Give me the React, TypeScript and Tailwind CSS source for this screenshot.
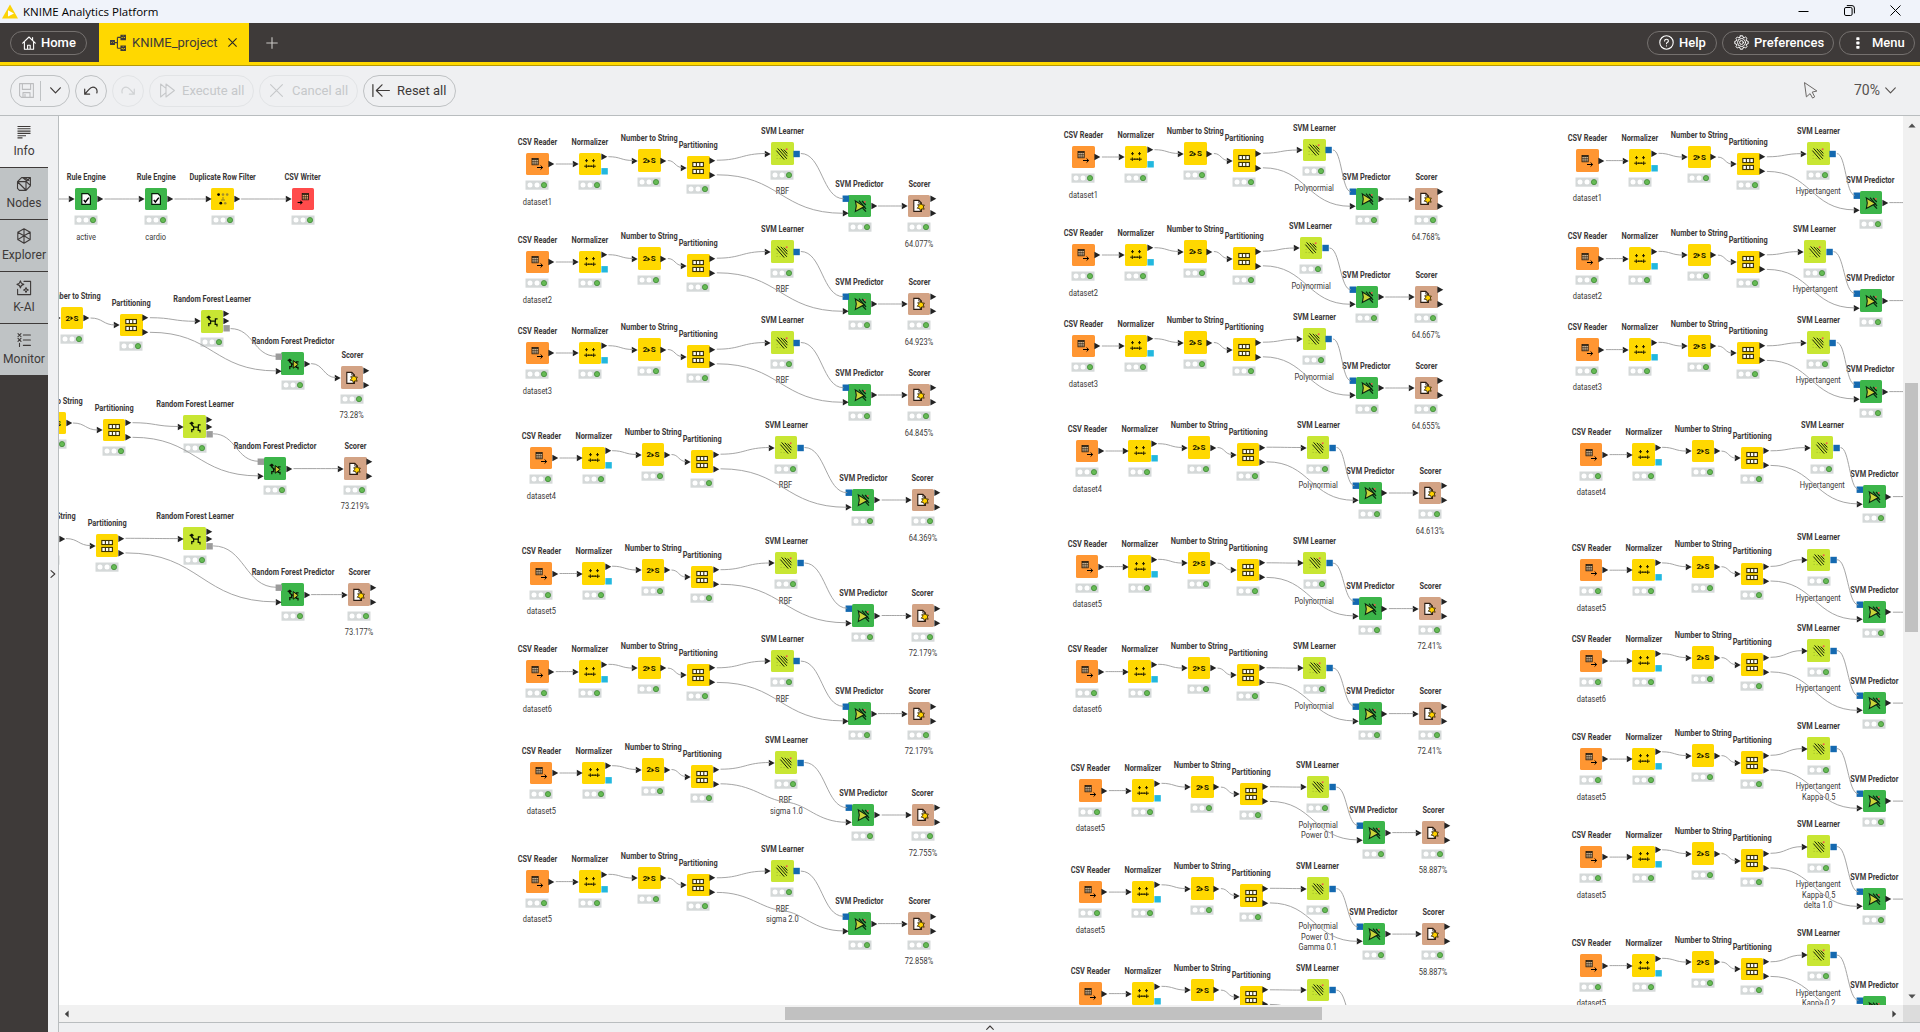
import React from "react";

type Kind =
  | "reader" | "normalizer" | "n2s" | "part" | "svmLearner" | "svmPredictor"
  | "scorer" | "rule" | "dup" | "writer" | "rfLearner" | "rfPredictor";

interface FlowNode {
  kind: Kind;
  x: number;
  y: number;
  label?: string[];
}
interface Wire {
  x1: number;
  y1: number;
  x2: number;
  y2: number;
  bend?: [number, number];
}

const ORIGIN_X = 59;
const ORIGIN_Y = 116;
const P = 7.3;

const TITLES: Record<Kind, string> = {
  reader: "CSV Reader",
  normalizer: "Normalizer",
  n2s: "Number to String",
  part: "Partitioning",
  svmLearner: "SVM Learner",
  svmPredictor: "SVM Predictor",
  scorer: "Scorer",
  rule: "Rule Engine",
  dup: "Duplicate Row Filter",
  writer: "CSV Writer",
  rfLearner: "Random Forest Learner",
  rfPredictor: "Random Forest Predictor",
};

const COLORS: Record<Kind, string> = {
  reader: "bg-[#ff9632]",
  normalizer: "bg-[#ffd800]",
  n2s: "bg-[#ffd800]",
  part: "bg-[#ffd800]",
  svmLearner: "bg-[#c8e633]",
  svmPredictor: "bg-[#3cb54a]",
  scorer: "bg-[#d3a385]",
  rule: "bg-[#3cb54a]",
  dup: "bg-[#ffd800]",
  writer: "bg-[#ff4b4b]",
  rfLearner: "bg-[#c8e633]",
  rfPredictor: "bg-[#3cb54a]",
};

type Port = [number, "tri" | "blue" | "cyan" | "gray"];
const INPUTS: Record<Kind, Port[]> = {
  reader: [],
  normalizer: [[0, "tri"]],
  n2s: [[0, "tri"]],
  part: [[0, "tri"]],
  svmLearner: [[0, "tri"]],
  svmPredictor: [[-P, "blue"], [P, "tri"]],
  scorer: [[0, "tri"]],
  rule: [[0, "tri"]],
  dup: [[0, "tri"]],
  writer: [[0, "tri"]],
  rfLearner: [[0, "tri"]],
  rfPredictor: [[-P, "gray"], [P, "tri"]],
};
const OUTPUTS: Record<Kind, Port[]> = {
  reader: [[0, "tri"]],
  normalizer: [[-P, "tri"], [P, "cyan"]],
  n2s: [[0, "tri"]],
  part: [[-P, "tri"], [P, "tri"]],
  svmLearner: [[0, "blue"]],
  svmPredictor: [[0, "tri"]],
  scorer: [[-P, "tri"], [P, "tri"]],
  rule: [[0, "tri"]],
  dup: [[0, "tri"]],
  writer: [],
  rfLearner: [[-P, "tri"], [0, "tri"], [P, "gray"]],
  rfPredictor: [[0, "tri"]],
};
const PORT_FILL = { tri: "#232323", blue: "#1469b0", cyan: "#22b8df", gray: "#9b9b9b" };

const nodes: FlowNode[] = [];
const wires: Wire[] = [];

function add(kind: Kind, x: number, y: number, label?: string[]): FlowNode {
  const n = { kind, x, y, label };
  if (x < 1920) nodes.push(n);
  return n;
}
function link(a: FlowNode, ao: number, b: FlowNode, bo: number, bend?: [number, number]) {
  wires.push({ x1: a.x + 18.5, y1: a.y + ao, x2: b.x - 16, y2: b.y + bo, bend });
}

function svmRow(
  x: number, y: number, lx: number, ly: number, px: number, sx: number,
  data: string, learner: string[], score: string, bent = false,
) {
  const r = add("reader", x, y, [data]);
  const n = add("normalizer", x + 52.6, y);
  const s = add("n2s", x + 112, y - 3.5);
  const p = add("part", x + 161, y + 3.5);
  const l = add("svmLearner", x + lx, y + ly, learner);
  const q = add("svmPredictor", x + px, y + 42);
  const c = add("scorer", x + sx, y + 42, score ? [score] : undefined);
  link(r, 0, n, 0);
  link(n, -P, s, 0);
  link(s, 0, p, 0);
  link(p, -P, l, 0);
  link(p, P, q, P, bent ? [l.x, l.y + 39.5] : undefined);
  link(l, 0, q, -P);
  link(q, 0, c, 0);
}

function rfRow(
  n2: [number, number], pt: [number, number], ln: [number, number],
  pr: [number, number], sc: [number, number], score: string,
) {
  const a = add("n2s", n2[0], n2[1]);
  const b = add("part", pt[0], pt[1]);
  const c = add("rfLearner", ln[0], ln[1]);
  const d = add("rfPredictor", pr[0], pr[1]);
  const e = add("scorer", sc[0], sc[1], [score]);
  link(a, 0, b, 0);
  link(b, -P, c, 0);
  link(b, P, d, P);
  link(c, P, d, -P);
  link(d, 0, e, 0);
}

const r1 = add("rule", 86, 199, ["active"]);
const r2 = add("rule", 156, 199, ["cardio"]);
const dp = add("dup", 222.6, 199);
const wr = add("writer", 303, 199);
link(r1, 0, r2, 0);
link(r2, 0, dp, 0);
link(dp, 0, wr, 0);
wires.push({ x1: 40, y1: 199, x2: 70, y2: 199 });

rfRow([72, 318], [131.4, 325], [212, 321.3], [292.6, 363.6], [352, 377.6], "73.28%");
rfRow([54.5, 423], [114, 430], [194.6, 426.5], [275, 468.6], [355.3, 468.6], "73.219%");
rfRow([47.5, 538.6], [107, 545.6], [194.6, 538.6], [292.6, 594.6], [359, 594.6], "73.177%");

const rbf: [number, number, string, string[], string][] = [
  [537.3, 164, "dataset1", ["RBF"], "64.077%"],
  [537.3, 262, "dataset2", ["RBF"], "64.923%"],
  [537.3, 353, "dataset3", ["RBF"], "64.845%"],
  [541, 458, "dataset4", ["RBF"], "64.369%"],
  [541, 573.5, "dataset5", ["RBF"], "72.179%"],
  [537.3, 671.6, "dataset6", ["RBF"], "72.179%"],
  [541, 773, "dataset5", ["RBF", "sigma 1.0"], "72.755%"],
  [537.3, 881.6, "dataset5", ["RBF", "sigma 2.0"], "72.858%"],
];
rbf.forEach(([x, y, d, l, s]) => svmRow(x, y, 245, -10.5, 322.2, 381.7, d, l, s, l.length > 1));

const poly: [number, number, number, number, string, string[], string][] = [
  [1083.4, 157, 231, -7, "dataset1", ["Polynormial"], "64.768%"],
  [1083.4, 255, 227.5, -7, "dataset2", ["Polynormial"], "64.667%"],
  [1083.4, 346, 231, -7, "dataset3", ["Polynormial"], "64.655%"],
  [1087, 451, 231, -3.5, "dataset4", ["Polynormial"], "64.613%"],
  [1087, 566.6, 227.5, -3.5, "dataset5", ["Polynormial"], "72.41%"],
  [1087, 671.6, 227.5, -3.5, "dataset6", ["Polynormial"], "72.41%"],
  [1090.4, 790.6, 227.5, -3.5, "dataset5", ["Polynormial", "Power 0.1"], "58.887%"],
  [1090.4, 892.1, 227.5, -3.5, "dataset5", ["Polynormial", "Power 0.1", "Gamma 0.1"], "58.887%"],
];
poly.forEach(([x, y, lx, ly, d, l, s]) => svmRow(x, y, lx, ly, 283.4, 343, d, l, s));

// The last polynomial row runs below the visible part of the canvas.
{
  const r = add("reader", 1090.4, 993.6);
  const n = add("normalizer", 1143, 993.6);
  const s = add("n2s", 1202.4, 990.1);
  const p = add("part", 1251.4, 997.1);
  const l = add("svmLearner", 1317.9, 990.1);
  link(r, 0, n, 0);
  link(n, -P, s, 0);
  link(s, 0, p, 0);
  link(p, -P, l, 0);
  wires.push({ x1: 1269.9, y1: 1004.4, x2: 1357.8, y2: 1042.9 });
  wires.push({ x1: 1336.4, y1: 990.1, x2: 1357.8, y2: 1028.3 });
}

const hyper: [number, number, number, number, string, string[]][] = [
  [1587.4, 160.6, 231, -7, "dataset1", ["Hypertangent"]],
  [1587.4, 258.6, 227.5, -7, "dataset2", ["Hypertangent"]],
  [1587.4, 349.6, 231, -7, "dataset3", ["Hypertangent"]],
  [1591, 454.6, 231, -7, "dataset4", ["Hypertangent"]],
  [1591, 570.2, 227.5, -10.5, "dataset5", ["Hypertangent"]],
  [1591, 661.1, 227.5, -10.5, "dataset6", ["Hypertangent"]],
  [1591, 759.1, 227.5, -10.5, "dataset5", ["Hypertangent", "Kappa 0.5"]],
  [1591, 857.1, 227.5, -10.5, "dataset5", ["Hypertangent", "Kappa 0.5", "delta 1.0"]],
  [1591, 965.6, 227.5, -10.5, "dataset5", ["Hypertangent", "Kappa 0.2"]],
];
hyper.forEach(([x, y, lx, ly, d, l]) => svmRow(x, y, lx, ly, 283.4, 343, d, l, ""));

function curve(x1: number, y1: number, x2: number, y2: number) {
  const m = (x1 + x2) / 2;
  return `C${m} ${y1} ${m} ${y2} ${x2} ${y2}`;
}
function wirePath({ x1, y1, x2, y2, bend }: Wire) {
  if (bend) {
    const [bx, by] = bend;
    const s = (y2 - y1) / (x2 - x1) / 3;
    return `M${x1} ${y1}C${(x1 + bx) / 2} ${y1} ${bx - 22} ${by - 22 * s} ${bx} ${by}C${bx + 22} ${by + 22 * s} ${(bx + x2) / 2} ${y2} ${x2} ${y2}`;
  }
  return `M${x1} ${y1}${curve(x1, y1, x2, y2)}`;
}

function NodeGlyph({ kind }: { kind: Kind }) {
  const table = (x: number, y: number, fill: string) => (
    <g transform={`translate(${x} ${y})`}>
      <rect x="0.4" y="0.4" width="6.2" height="6.4" fill={fill} stroke="#1c1206" strokeWidth="0.8" />
      <path d="M0.4 1.3H6.6" stroke="#1c1206" strokeWidth="1.1" />
      <path d="M0.4 3.4H6.6M0.4 5.1H6.6M2.5 2V6.8M4.6 2V6.8" stroke="#1c1206" strokeWidth="0.6" />
    </g>
  );
  switch (kind) {
    case "reader":
      return (
        <>
          {table(-5.4, -6, "#ffe0b8")}
          <path d="M0 3.5H5.4M3.6 1.5L5.7 3.5L3.6 5.5" stroke="#000" strokeWidth="1" fill="none" />
        </>
      );
    case "writer":
      return (
        <>
          {table(-1.2, -6, "#ffc08a")}
          <path d="M-5.4 3.5H-1.8" stroke="#000" strokeWidth="1.1" />
          <path d="M-2.6 1.3L-0.2 3.5L-2.6 5.7Z" fill="#000" />
        </>
      );
    case "normalizer":
      return (
        <path
          d="M-5 -3.3H-2M-3.5 -5V-1.8M2 -3.3H5M3.5 -5V-1.8M-5.8 2.2H5.8M-3.7 0.4V4M-1.2 1.4V3M1.2 1.4V3M3.7 0.4V4"
          stroke="#231d00" strokeWidth="1" fill="none"
        />
      );
    case "part":
      return (
        <>
          {[-5.5, 1.4].map((y) => (
            <g key={y} stroke="#3b3200" strokeWidth="1.1">
              <rect x="-5.2" y={y} width="10.6" height="4.1" fill="#fff" />
              <path d={`M-1.6 ${y}v4.1M1.8 ${y}v4.1`} />
            </g>
          ))}
        </>
      );
    case "svmLearner":
      return (
        <>
          <path d="M-5.6 -3.4L2.2 5.6M-4.4 -5.6L4.8 4.8M-1.2 -5.2L5.4 2.2M1.8 -4.4L5.4 -0.6" stroke="#16200a" strokeWidth="1" />
          <rect x="3.8" y="-5.6" width="1.7" height="1.7" fill="#f0524f" />
          <path d="M-5.4 1.4h1M-5.4 4.4h1M-2.4 4.6h1" stroke="#9bb52a" strokeWidth="1" />
        </>
      );
    case "svmPredictor":
      return (
        <>
          <path d="M-1 -5.4L6 3M2 -5L5.8 -1M2.6 2L6 5.6" stroke="#0b2a10" strokeWidth="1.2" />
          <path d="M-4.6 -5L4.4 0.6L-4.6 5.4Q-2.8 0.2 -4.6 -5Z" fill="#c9d63a" stroke="#0b2010" strokeWidth="1.1" />
          <rect x="4" y="-5" width="1.6" height="1.6" fill="#e8534f" />
        </>
      );
    case "scorer":
      return (
        <>
          <path d="M-5.2 -5.6H-0.2L2.4 -3V5.4H-5.2Z" fill="#fff" stroke="#2b1c12" strokeWidth="1.1" />
          <path d="M-0.2 -5.4V-2.8H2.4" stroke="#2b1c12" strokeWidth="0.8" fill="none" />
          <path d="M2 -3L3 -1L5.4 -0.9L4.2 1L5.2 3.2L2.8 2.8L1.4 4.8L0.6 2.6L-1.8 2.2L-0.4 0.6L-1.2 -1.4L1 -1Z" fill="#ffd200" stroke="#2b1c00" strokeWidth="0.8" />
        </>
      );
    case "rule":
      return (
        <>
          <path d="M-4.2 -5.4H2L4.4 -3V5.4H-4.2Z" fill="#fff" stroke="#061f0a" strokeWidth="1.2" />
          <path d="M-2.2 1L-0.6 3L2.8 -1.4" fill="none" stroke="#000" strokeWidth="1.4" />
        </>
      );
    case "dup":
      return (
        <>
          <circle cx="-4.4" cy="-4.4" r="1.4" fill="#000" />
          <circle cx="0" cy="-4.4" r="1.3" fill="#a38e2a" />
          <circle cx="4.2" cy="-4.4" r="1.3" fill="#a38e2a" />
          <path d="M0 -2V0.8M-2 1H2" stroke="#8b7820" strokeWidth="0.9" />
          <circle cx="-2.2" cy="4.2" r="1.4" fill="#000" />
          <circle cx="2.2" cy="4.2" r="1.3" fill="#a38e2a" />
        </>
      );
    case "rfLearner":
    case "rfPredictor":
      return (
        <>
          <circle cx="-3.3" cy="-3.6" r="1.4" fill="#000" />
          <path d="M-5.4 -3.6H-1.4M-3.3 -5.2V-2L-1 0H3.4V-2.2H5.6M-1.4 0V2.6H-3.2V5.2M3.2 0V3.4H5V5.4" stroke="#0b1405" strokeWidth="1.25" fill="none" />
          {kind === "rfPredictor" && (
            <path d="M0.2 -3.4L5.2 0.4L0.2 4.2Z" fill="#c9c832" stroke="#0b1405" strokeWidth="1" />
          )}
        </>
      );
    case "n2s":
      return <path d="M-1.5 -1.9L1.3 0.2L-1.5 2.3Z" fill="#231d00" />;
  }
}

function PortMark({ side, port }: { side: "in" | "out"; port: Port }) {
  const [dy, type] = port;
  const fill = PORT_FILL[type];
  if (type === "tri") {
    const x = side === "in" ? -17.2 : 11.4;
    return <path d={`M${x} ${dy - 3.2}L${x + 5.9} ${dy}L${x} ${dy + 3.2}Z`} fill={fill} />;
  }
  return <rect x={side === "in" ? -17.4 : 11.4} y={dy - 3.2} width="6.4" height="6.4" fill={fill} />;
}

function NodeView({ node }: { node: FlowNode }) {
  const { kind, x, y, label } = node;
  return (
    <div className="absolute h-0 w-0" style={{ left: x - ORIGIN_X, top: y - ORIGIN_Y }}>
      <div className={`absolute -left-[11.2px] -top-[11.2px] h-[22.4px] w-[22.4px] rounded-[1.6px] ${COLORS[kind]}`} />
      <svg className="absolute -left-5 -top-5 h-12 w-10" viewBox="-20 -20 40 48">
        <NodeGlyph kind={kind} />
        {INPUTS[kind].map((p) => <PortMark key={"i" + p[0]} side="in" port={p} />)}
        {OUTPUTS[kind].map((p) => <PortMark key={"o" + p[0]} side="out" port={p} />)}
        <rect x="-11.5" y="16.5" width="23" height="9.2" fill="#d5d9d9" />
        <circle cx="-7" cy="21.1" r="2.5" fill="#fff" />
        <circle cx="0" cy="21.1" r="2.5" fill="#fff" />
        <circle cx="7" cy="21.1" r="2.6" fill="#66bb55" stroke="#3f8a35" strokeWidth="0.8" />
      </svg>
      {kind === "n2s" && (
        <div className="absolute -left-[7px] -top-[4.5px] flex w-[14px] justify-between px-[0.5px] text-[8px] font-bold leading-[10px] text-[#231d00]">
          <span>2</span>
          <span>S</span>
        </div>
      )}
      <div className="absolute -left-[60px] -top-[28.4px] flex w-[120px] justify-center whitespace-nowrap text-[8.4px] font-bold leading-[12px] text-[#3b3838]">
        <span className="scale-x-[0.88]">{TITLES[kind]}</span>
      </div>
      {label && (
        <div className="absolute -left-[40px] top-[32.9px] flex w-[80px] flex-col items-center whitespace-nowrap text-[8.4px] leading-[10.4px] text-[#3b3838]">
          {label.map((t) => <span key={t} className="scale-x-[0.89]">{t}</span>)}
        </div>
      )}
    </div>
  );
}

function Pill({ className, children }: { className: string; children: React.ReactNode }) {
  return <div className={`flex shrink-0 items-center rounded-full border ${className}`}>{children}</div>;
}

const stroke = { fill: "none", stroke: "currentColor", strokeLinecap: "round", strokeLinejoin: "round" } as const;

function TitleBar() {
  return (
    <div className="flex h-[23px] items-center bg-[#f0f3fa] text-black">
      <svg className="ml-[2px] h-[15px] w-4" viewBox="0 0 16 15">
        <path d="M8 0.5L16 14.5H0Z" fill="#fcd307" />
        <path d="M6 6.2L12 9.6L6 12.6Z" fill="#fff" />
      </svg>
      <span className="ml-[5px] mt-[1px] font-['Open_Sans','Noto_Sans',sans-serif] text-[11.5px] leading-none">KNIME Analytics Platform</span>
      <div className="ml-auto mr-[19px] flex items-center gap-[35px]">
        <svg className="h-[11px] w-[11px]" viewBox="0 0 11 11"><path d="M0.5 5.5H10.5" stroke="#000" /></svg>
        <svg className="-mt-[2px] h-[11px] w-[11px]" viewBox="0 0 11 11" fill="none" stroke="#000">
          <rect x="0.5" y="2.5" width="7.6" height="8" rx="1.4" />
          <path d="M2.8 0.6H8Q10.4 0.6 10.4 3V8.4" />
        </svg>
        <svg className="-mt-[2px] h-[11px] w-[11px]" viewBox="0 0 11 11"><path d="M0.5 0.5L10.5 10.5M10.5 0.5L0.5 10.5" stroke="#000" /></svg>
      </div>
    </div>
  );
}

function WorkflowIcon() {
  return (
    <svg className="h-[18px] w-[17px]" viewBox="0 0 17 18" fill="none" stroke="currentColor" strokeWidth="1.1">
      <path d="M0.6 6.6H4.4V10.4H0.6ZM0.6 6.6L4.4 10.4M4.4 6.6L0.6 10.4" />
      <path d="M11 1.2H15.4V5.6H11ZM11 1.2L15.4 5.6M15.4 1.2L11 5.6" />
      <path d="M11 12H15.4V16.4H11ZM11 12L15.4 16.4M15.4 12L11 16.4" />
      <path d="M4.4 8.6H7.4M7.4 3.4V14.2M7.4 3.4H11M7.4 14.2H11" />
    </svg>
  );
}

function TabBar() {
  return (
    <div className="flex h-[39px] items-center bg-[#3e3a39] text-[13px] text-white">
      <Pill className="ml-[10px] h-6 w-[77px] border-[#75716f] pl-[11px] font-medium">
        <svg className="mr-[5px] h-[14px] w-[14px]" viewBox="0 0 14 14" strokeWidth="1.1" {...stroke}>
          <path d="M0.7 7.2L7 1L13.3 7.2M2.4 6V13.2H11.6V6M5.6 13V9.2H8.2V13M10.6 3.8V1.6" />
        </svg>
        Home
      </Pill>
      <div className="ml-[12px] flex h-full w-[150px] items-center bg-[#ffd800] text-[#3e3a39]">
        <span className="ml-[11px]"><WorkflowIcon /></span>
        <span className="ml-[5px] w-[86px]">KNIME_project</span>
        <svg className="ml-[10px] h-[9px] w-[9px]" viewBox="0 0 9 9" stroke="#2a2625" strokeWidth="1.1"><path d="M0.4 0.4L8.6 8.6M8.6 0.4L0.4 8.6" /></svg>
      </div>
      <svg className="ml-[17px] h-3 w-3" viewBox="0 0 12 12" stroke="#c9c7c6" strokeWidth="1.1"><path d="M6 0.3V11.7M0.3 6H11.7" /></svg>
      <div className="ml-auto mr-[5px] flex gap-[5px] font-medium">
        <Pill className="h-6 w-[70px] border-[#75716f] pl-[11px]">
          <svg className="mr-[5px] h-[15px] w-[15px]" viewBox="0 0 15 15" strokeWidth="1.1" {...stroke}>
            <circle cx="7.5" cy="7.5" r="6.7" />
            <path d="M5.6 6Q5.6 4.2 7.5 4.2T9.4 5.9Q9.4 6.9 8.2 7.4Q7.5 7.8 7.5 8.8M7.5 10.8V10.9" />
          </svg>
          Help
        </Pill>
        <Pill className="h-6 w-[112px] border-[#75716f] pl-[11px]">
          <svg className="mr-[5px] h-[15px] w-[15px]" viewBox="0 0 15 15" strokeWidth="1" {...stroke}>
            <circle cx="7.5" cy="7.5" r="1.9" />
            <circle cx="7.5" cy="7.5" r="4" />
            <path d="M6.3 0.8H8.7L9.1 2.3L10.2 2.8L11.6 2L13 3.4L12.2 4.8L12.7 5.9L14.2 6.3V8.7L12.7 9.1L12.2 10.2L13 11.6L11.6 13L10.2 12.2L9.1 12.7L8.7 14.2H6.3L5.9 12.7L4.8 12.2L3.4 13L2 11.6L2.8 10.2L2.3 9.1L0.8 8.7V6.3L2.3 5.9L2.8 4.8L2 3.4L3.4 2L4.8 2.8L5.9 2.3Z" />
          </svg>
          Preferences
        </Pill>
        <Pill className="h-6 w-[76px] border-[#75716f] pl-4">
          <svg className="mr-[12px] h-3 w-1" viewBox="0 0 4 12" fill="#fff">
            <rect x="0.3" y="0.3" width="3.2" height="2.8" rx="0.6" /><rect x="0.3" y="4.6" width="3.2" height="2.8" rx="0.6" /><rect x="0.3" y="8.9" width="3.2" height="2.8" rx="0.6" />
          </svg>
          Menu
        </Pill>
      </div>
    </div>
  );
}

function Toolbar() {
  return (
    <div className="flex h-[50px] items-center gap-[5px] border-b border-[#b9bdbf] bg-[#eff0f2] pl-[10px] text-[13px] text-[#3e3a39]">
      <Pill className="h-8 w-[60px] border-[#bfc2c4]">
        <svg className="ml-[8px] h-[15px] w-[15px] text-[#bcbdbf]" viewBox="0 0 15 15" strokeWidth="1.1" {...stroke}>
          <path d="M0.6 0.6H14.4V14.4H2.4L0.6 12.6ZM3.4 0.8V6.4H11.6V0.8M4 14.2V9.6H11V14.2M6 11.4V14" />
        </svg>
        <span className="ml-[6px] h-5 w-px bg-[#bfc2c4]" />
        <svg className="ml-[9px] h-[7px] w-[11px]" viewBox="0 0 11 7" strokeWidth="1.2" {...stroke}><path d="M0.7 0.8L5.5 5.8L10.3 0.8" /></svg>
      </Pill>
      <Pill className="h-8 w-8 justify-center border-[#bfc2c4]">
        <svg className="h-[9px] w-[14px]" viewBox="0 0 14 9" strokeWidth="1.2" {...stroke}><path d="M0.7 3.2V8.2H5.6M0.9 8L5 3.4Q8.4 -0.6 12 2.4Q13.6 4.4 12.8 7" /></svg>
      </Pill>
      <Pill className="h-8 w-8 justify-center border-[#e2e4e6] text-[#d0d2d4]">
        <svg className="h-[9px] w-[14px]" viewBox="0 0 14 9" strokeWidth="1.2" {...stroke}><path d="M13.3 3.2V8.2H8.4M13.1 8L9 3.4Q5.6 -0.6 2 2.4Q0.4 4.4 1.2 7" /></svg>
      </Pill>
      <Pill className="h-8 w-[105px] border-[#e2e4e6] pl-[10px] text-[#c6c8ca]">
        <svg className="mr-[7px] h-[15px] w-[15px]" viewBox="0 0 15 15" strokeWidth="1.1" {...stroke}><path d="M0.6 1V14L6 9.6V14L14.4 7.5L6 1V5.4ZM6 5.4V9.6" /></svg>
        Execute all
      </Pill>
      <Pill className="h-8 w-[99px] border-[#e2e4e6] pl-[10px] text-[#c6c8ca]">
        <svg className="mr-[9px] h-[13px] w-[13px]" viewBox="0 0 13 13" strokeWidth="1.1" {...stroke}><path d="M0.6 0.6L12.4 12.4M12.4 0.6L0.6 12.4" /></svg>
        Cancel all
      </Pill>
      <Pill className="h-8 w-[93px] border-[#bfc2c4] pl-[8px]">
        <svg className="mr-[7px] h-[13px] w-[18px]" viewBox="0 0 18 13" strokeWidth="1.2" {...stroke}><path d="M0.9 0.6V12.4M4.4 6.5H17.4M10 0.8L4.4 6.5L10 12.2" /></svg>
        Reset all
      </Pill>
      <svg className="ml-auto h-[17px] w-[14px] text-[#6b6866]" viewBox="0 0 14 17" strokeWidth="1" {...stroke}>
        <path d="M0.8 0.8L12.9 9L8.2 10.1L10.7 14.8L8.6 16.1L6.1 11.6L2.7 14.6Z" />
      </svg>
      <div className="-mt-px ml-[31px] mr-[24px] flex items-center text-[14px] text-[#55514f]">
        70%
        <svg className="ml-[5px] mt-[1px] h-[7px] w-[11px]" viewBox="0 0 11 7" strokeWidth="1.1" {...stroke}><path d="M0.7 0.8L5.5 5.8L10.3 0.8" /></svg>
      </div>
    </div>
  );
}

const SIDE: { name: string; icon: React.ReactNode }[] = [
  { name: "Info", icon: <path d="M1.5 2.5H14.5M1.5 4.8H14.5M1.5 7.1H14.5M1.5 9.4H14.5M1.5 11.7H10M1.5 13.9H6.5" strokeLinecap="butt" /> },
  { name: "Nodes", icon: <path d="M1.5 5.6L10 5.6V14.4H3.4L1.5 12.4ZM1.5 5.6L5.6 1.6H14.4L10 5.6M14.4 1.6V9.8L10 14.4M1.8 6L9.8 14M7 1.8L11 5M8.6 1.6L13 4.6M10.5 5.8L14 9" /> },
  { name: "Explorer", icon: <path d="M8 0.8L14.2 4.2V11.6L8 15.2L1.8 11.6V4.2ZM1.8 4.2L8 7.8L14.2 4.2M8 7.8V15.2M8 0.8V7.8M1.8 11.6L8 7.8L14.2 11.6" /> },
  { name: "K-AI", icon: <path d="M8 1.4H14.6V14.6H1.6V9.4M4.4 0.8Q4.8 3.8 7.8 4.4Q4.8 5 4.4 8Q4 5 1 4.4Q4 3.8 4.4 0.8ZM10 7.6Q10.3 9.7 12.4 10Q10.3 10.3 10 12.4Q9.7 10.3 7.6 10Q9.7 9.7 10 7.6Z" /> },
  { name: "Monitor", icon: <path d="M2 1.6L5 4.6M5 1.6L2 4.6M2 6.4L5 9.4M5 6.4L2 9.4M3.5 11.2V14.4M7.4 3H14.4M7.4 8H14.4M7.4 13.4H14.4" /> },
];

function Sidebar() {
  return (
    <div className="flex w-12 shrink-0 flex-col bg-[#3e3a39]">
      {SIDE.map((s, i) => (
        <div
          key={s.name}
          className={`flex h-[52px] flex-col items-center border-b border-[#3e3a39] text-[12.1px] text-[#3e3a39] ${i === 0 ? "bg-[#eff0f2]" : "bg-[#bfc3c5]"}`}
        >
          <svg className="mt-[8px] h-4 w-4" viewBox="0 0 16 16" strokeWidth="1.1" {...stroke}>{s.icon}</svg>
          <span className="mt-[3px] leading-4">{s.name}</span>
        </div>
      ))}
    </div>
  );
}

function Canvas() {
  return (
    <div className="relative min-h-0 flex-1 overflow-hidden bg-white">
      {nodes.map((n, i) => <NodeView key={i} node={n} />)}
      <svg className="absolute left-0 top-0 h-[889px] w-[1844px]" viewBox="59 116 1844 889" fill="none" stroke="#9b9b9b" strokeWidth="0.9">
        {wires.map((w, i) => <path key={i} d={wirePath(w)} />)}
      </svg>
    </div>
  );
}

export default function App() {
  return (
    <div className="flex h-[1032px] w-[1920px] flex-col overflow-hidden bg-[#eff0f2] font-[Roboto,sans-serif]">
      <TitleBar />
      <TabBar />
      <div className="h-1 border-b border-[#b59a08] bg-[#ffd800]" />
      <Toolbar />
      <div className="flex min-h-0 flex-1">
        <Sidebar />
        <div className="flex w-[11px] shrink-0 items-center border-r border-[#b9bdbf] pl-[2px]">
          <svg className="h-[8px] w-[6px] text-[#3e3a39]" viewBox="0 0 6 8" strokeWidth="1.1" {...stroke}><path d="M1 0.6L4.8 4L1 7.4" /></svg>
        </div>
        <div className="flex min-w-0 flex-1 flex-col">
          <div className="flex min-h-0 flex-1">
            <div className="flex min-w-0 flex-1 flex-col">
              <Canvas />
              <div className="flex h-[17px] shrink-0 items-center bg-[#f1f1f1]">
                <svg className="ml-[5px] h-2 w-[5px]" viewBox="0 0 5 8"><path d="M4.6 0.4V7.6L0.8 4Z" fill="#404040" /></svg>
                <div className="ml-[716px] h-[13px] w-[537px] bg-[#c1c1c1]" />
                <svg className="ml-auto mr-[6px] h-2 w-[5px]" viewBox="0 0 5 8"><path d="M0.4 0.4V7.6L4.2 4Z" fill="#404040" /></svg>
              </div>
            </div>
            <div className="flex w-[17px] shrink-0 flex-col items-center bg-[#f1f1f1]">
              <svg className="mt-[7px] h-[5px] w-2 shrink-0" viewBox="0 0 8 5"><path d="M0.4 4.4H7.6L4 0.6Z" fill="#505050" /></svg>
              <div className="mt-[255px] h-[249px] w-[13px] shrink-0 bg-[#c1c1c1]" />
              <svg className="mb-[6px] mt-auto h-[5px] w-2 shrink-0" viewBox="0 0 8 5"><path d="M0.4 0.6H7.6L4 4.4Z" fill="#505050" /></svg>
              <div className="h-[17px] w-full shrink-0 bg-[#dcdcdc]" />
            </div>
          </div>
          <div className="flex h-[10px] shrink-0 items-center justify-center border-t border-[#b9bdbf] bg-[#eff0f2]">
            <svg className="h-[5px] w-[8px] text-[#3e3a39]" viewBox="0 0 8 5" strokeWidth="1.1" {...stroke}><path d="M0.7 4.3L4 1L7.3 4.3" /></svg>
          </div>
        </div>
      </div>
    </div>
  );
}
